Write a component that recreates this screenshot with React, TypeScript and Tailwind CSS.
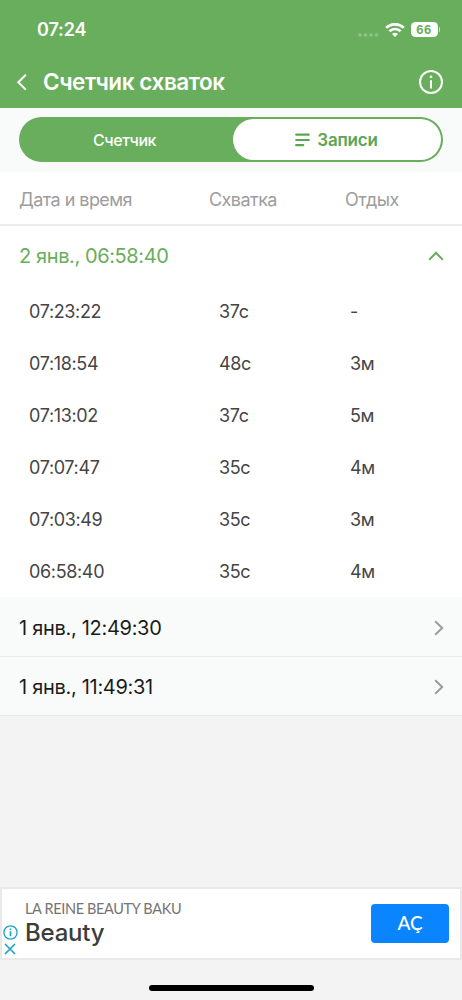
import React, { useState } from 'react';

interface Contraction {
  time: string;
  duration: string;
  rest: string;
}

interface Session {
  title: string;
  records: Contraction[];
}

const sessions: Session[] = [
  {
    title: '2 янв., 06:58:40',
    records: [
      { time: '07:23:22', duration: '37с', rest: '-' },
      { time: '07:18:54', duration: '48с', rest: '3м' },
      { time: '07:13:02', duration: '37с', rest: '5м' },
      { time: '07:07:47', duration: '35с', rest: '4м' },
      { time: '07:03:49', duration: '35с', rest: '3м' },
      { time: '06:58:40', duration: '35с', rest: '4м' },
    ],
  },
  { title: '1 янв., 12:49:30', records: [] },
  { title: '1 янв., 11:49:31', records: [] },
];

const StatusBar = () => (
  <div className="flex h-[58px] items-center pl-[37px] pr-[22px] pt-[2px]">
    <span className="text-[18px] font-semibold leading-6 tracking-[-0.1px]">07:24</span>
    <div className="ml-auto flex items-center">
      <svg className="mt-[9px] mr-[6px]" width="22" height="4" viewBox="0 0 22 4" fill="#8fc487">
        <circle cx="3" cy="2" r="1.8" />
        <circle cx="8.5" cy="2" r="1.8" />
        <circle cx="14" cy="2" r="1.8" />
        <circle cx="19.5" cy="2" r="1.8" />
      </svg>
      <svg className="mb-px" width="20" height="14" viewBox="0 0 20 14" fill="none" stroke="currentColor" strokeWidth="2.7">
        <path d="M1.2 4.9a12.6 12.6 0 0 1 17.6 0" />
        <path d="M4.4 8.3a8 8 0 0 1 11.2 0" />
        <path d="M10 14 7 11a4.2 4.2 0 0 1 6 0Z" fill="currentColor" stroke="none" />
      </svg>
      <div className="mb-px ml-[6px] flex h-[15px] w-[27px] items-center justify-center rounded-[4.5px] bg-white font-['Liberation_Sans',sans-serif] text-[13px] font-bold leading-none tracking-[0.4px] text-[#68ae5c]">
        66
      </div>
      <div className="mb-px ml-px h-[5px] w-[1.5px] rounded-r-full bg-[#c5e2c0]" />
    </div>
  </div>
);

const Header = () => (
  <header className="h-[108px] bg-[#68ae5c] text-white">
    <StatusBar />
    <div className="flex h-[48px] items-center pl-[16px] pr-[18px]">
      <button aria-label="Назад">
        <svg width="12" height="18" viewBox="0 0 12 18" fill="none" stroke="currentColor" strokeWidth="2">
          <path d="M9.8 1.8 2.3 9.2l7.5 7.4" />
        </svg>
      </button>
      <h1 className="ml-[15px] text-[22.5px] font-semibold leading-7 tracking-[-0.43px]">Счетчик схваток</h1>
      <button className="ml-auto" aria-label="Информация">
        <svg width="26" height="26" viewBox="0 0 26 26" fill="none" stroke="currentColor" strokeWidth="2">
          <circle cx="13" cy="13" r="11" />
          <path d="M13 11.2v8.2" />
          <circle cx="13" cy="7.8" r="1.4" fill="currentColor" stroke="none" />
        </svg>
      </button>
    </div>
  </header>
);

const Tabs = () => (
  <div className="h-[64px] bg-[#f9fbfa] px-[19px] pt-[9px]">
    <div className="flex h-[45px] rounded-full bg-[#68ae5c] p-[2px] leading-5">
      <button className="w-[212px] pr-[5px] text-[16px] font-medium tracking-[-0.4px] text-white">Счетчик</button>
      <button className="flex flex-1 items-center justify-center gap-[7px] rounded-full bg-white pr-px text-[17px] font-semibold tracking-[-0.2px] text-[#5da650]">
        <svg width="15" height="14" viewBox="0 0 15 14" fill="none" stroke="currentColor" strokeWidth="2.2" strokeLinecap="round">
          <path d="M1.2 1.6h12.6M1.2 7h12.6M1.2 12.2h7" />
        </svg>
        Записи
      </button>
    </div>
  </div>
);

function App() {
  const [openIndex, setOpenIndex] = useState(0);

  return (
    <div className="flex h-[1000px] w-[462px] flex-col overflow-hidden bg-[#f3f3f3] font-['Inter',sans-serif]">
      <Header />
      <Tabs />

      {/* Column titles */}
      <div className="flex h-[54px] items-center border-b-2 border-[#ececec] bg-white pl-[19px] pt-[2px] text-[18px] tracking-[-0.55px] text-[#9d9d9d]">
        <span className="w-[190px]">Дата и время</span>
        <span className="w-[136px]">Схватка</span>
        <span>Отдых</span>
      </div>

      {sessions.map((session, index) => {
        const isOpen = index === openIndex;
        if (isOpen) {
          return (
            <section key={session.title} className="h-[371px] bg-white">
              <button
                onClick={() => setOpenIndex(-1)}
                className="flex h-[59px] w-full items-center justify-between pl-[19px] pr-[18px] text-[20px] tracking-[-0.4px] text-[#68ae5c]"
              >
                {session.title}
                <svg width="16" height="10" viewBox="0 0 16 10" fill="none" stroke="currentColor" strokeWidth="2">
                  <path d="m1.2 8.8 6.8-7 6.8 7" />
                </svg>
              </button>
              {session.records.map((record) => (
                <div key={record.time} className="flex h-[52px] items-center pl-[29px] text-[18px] tracking-[-0.35px] text-[#454545]">
                  <span className="w-[190px]">{record.time}</span>
                  <span className="w-[131px]">{record.duration}</span>
                  <span>{record.rest}</span>
                </div>
              ))}
            </section>
          );
        }
        return (
          <button
            key={session.title}
            onClick={() => setOpenIndex(index)}
            className="flex h-[59px] w-full items-center justify-between border-b border-[#e9ebea] bg-[#f9fbfa] pl-[19px] pr-[18px] pt-px text-[20px] tracking-[-0.3px] text-[#1b1b1b] first-of-type:h-[60px] first-of-type:pt-[2px]"
          >
            {session.title}
            <svg width="10" height="16" viewBox="0 0 10 16" fill="none" stroke="#999999" strokeWidth="1.9">
              <path d="m1.2 1.2 7 6.8-7 6.8" />
            </svg>
          </button>
        );
      })}

      {/* Ad banner */}
      <div className="mt-auto flex h-[73px] shrink-0 border-2 border-[#e9e9e9] bg-white">
        <div className="flex w-[23px] flex-col items-center justify-end gap-[3px] pb-[3px] pr-[7px] text-[#18a5c5]">
          <svg width="15" height="15" viewBox="0 0 15 15" fill="none" stroke="currentColor" strokeWidth="1.3">
            <circle cx="7.5" cy="7.5" r="6.6" />
            <path d="M7.5 6.3v5M7.5 3.4v1.7" strokeWidth="1.7" />
          </svg>
          <svg width="12" height="12" viewBox="0 0 12 12" fill="none" stroke="currentColor" strokeWidth="1.6">
            <path d="m1 1 10 10M11 1 1 11" />
          </svg>
        </div>
        <div className="pt-[11px]">
          <p className="font-['Lato',sans-serif] text-[14.5px] leading-[18px] tracking-[-0.35px] text-[#747474]">LA REINE BEAUTY BAKU</p>
          <p className="mt-px text-[24px] font-medium leading-[28px] tracking-[-0.2px] text-[#3c3c3c]">Beauty</p>
        </div>
        <button className="ml-auto mr-[11px] mt-[15px] h-[39px] w-[78px] rounded-[4px] bg-[#0a84ff] font-['Lato',sans-serif] text-[19px] font-medium text-white">
          AÇ
        </button>
      </div>
      <div className="flex h-[40px] shrink-0 justify-center pt-[24.5px]">
        <div className="h-[6px] w-[165px] rounded-full bg-black" />
      </div>
    </div>
  );
}

export default App;
